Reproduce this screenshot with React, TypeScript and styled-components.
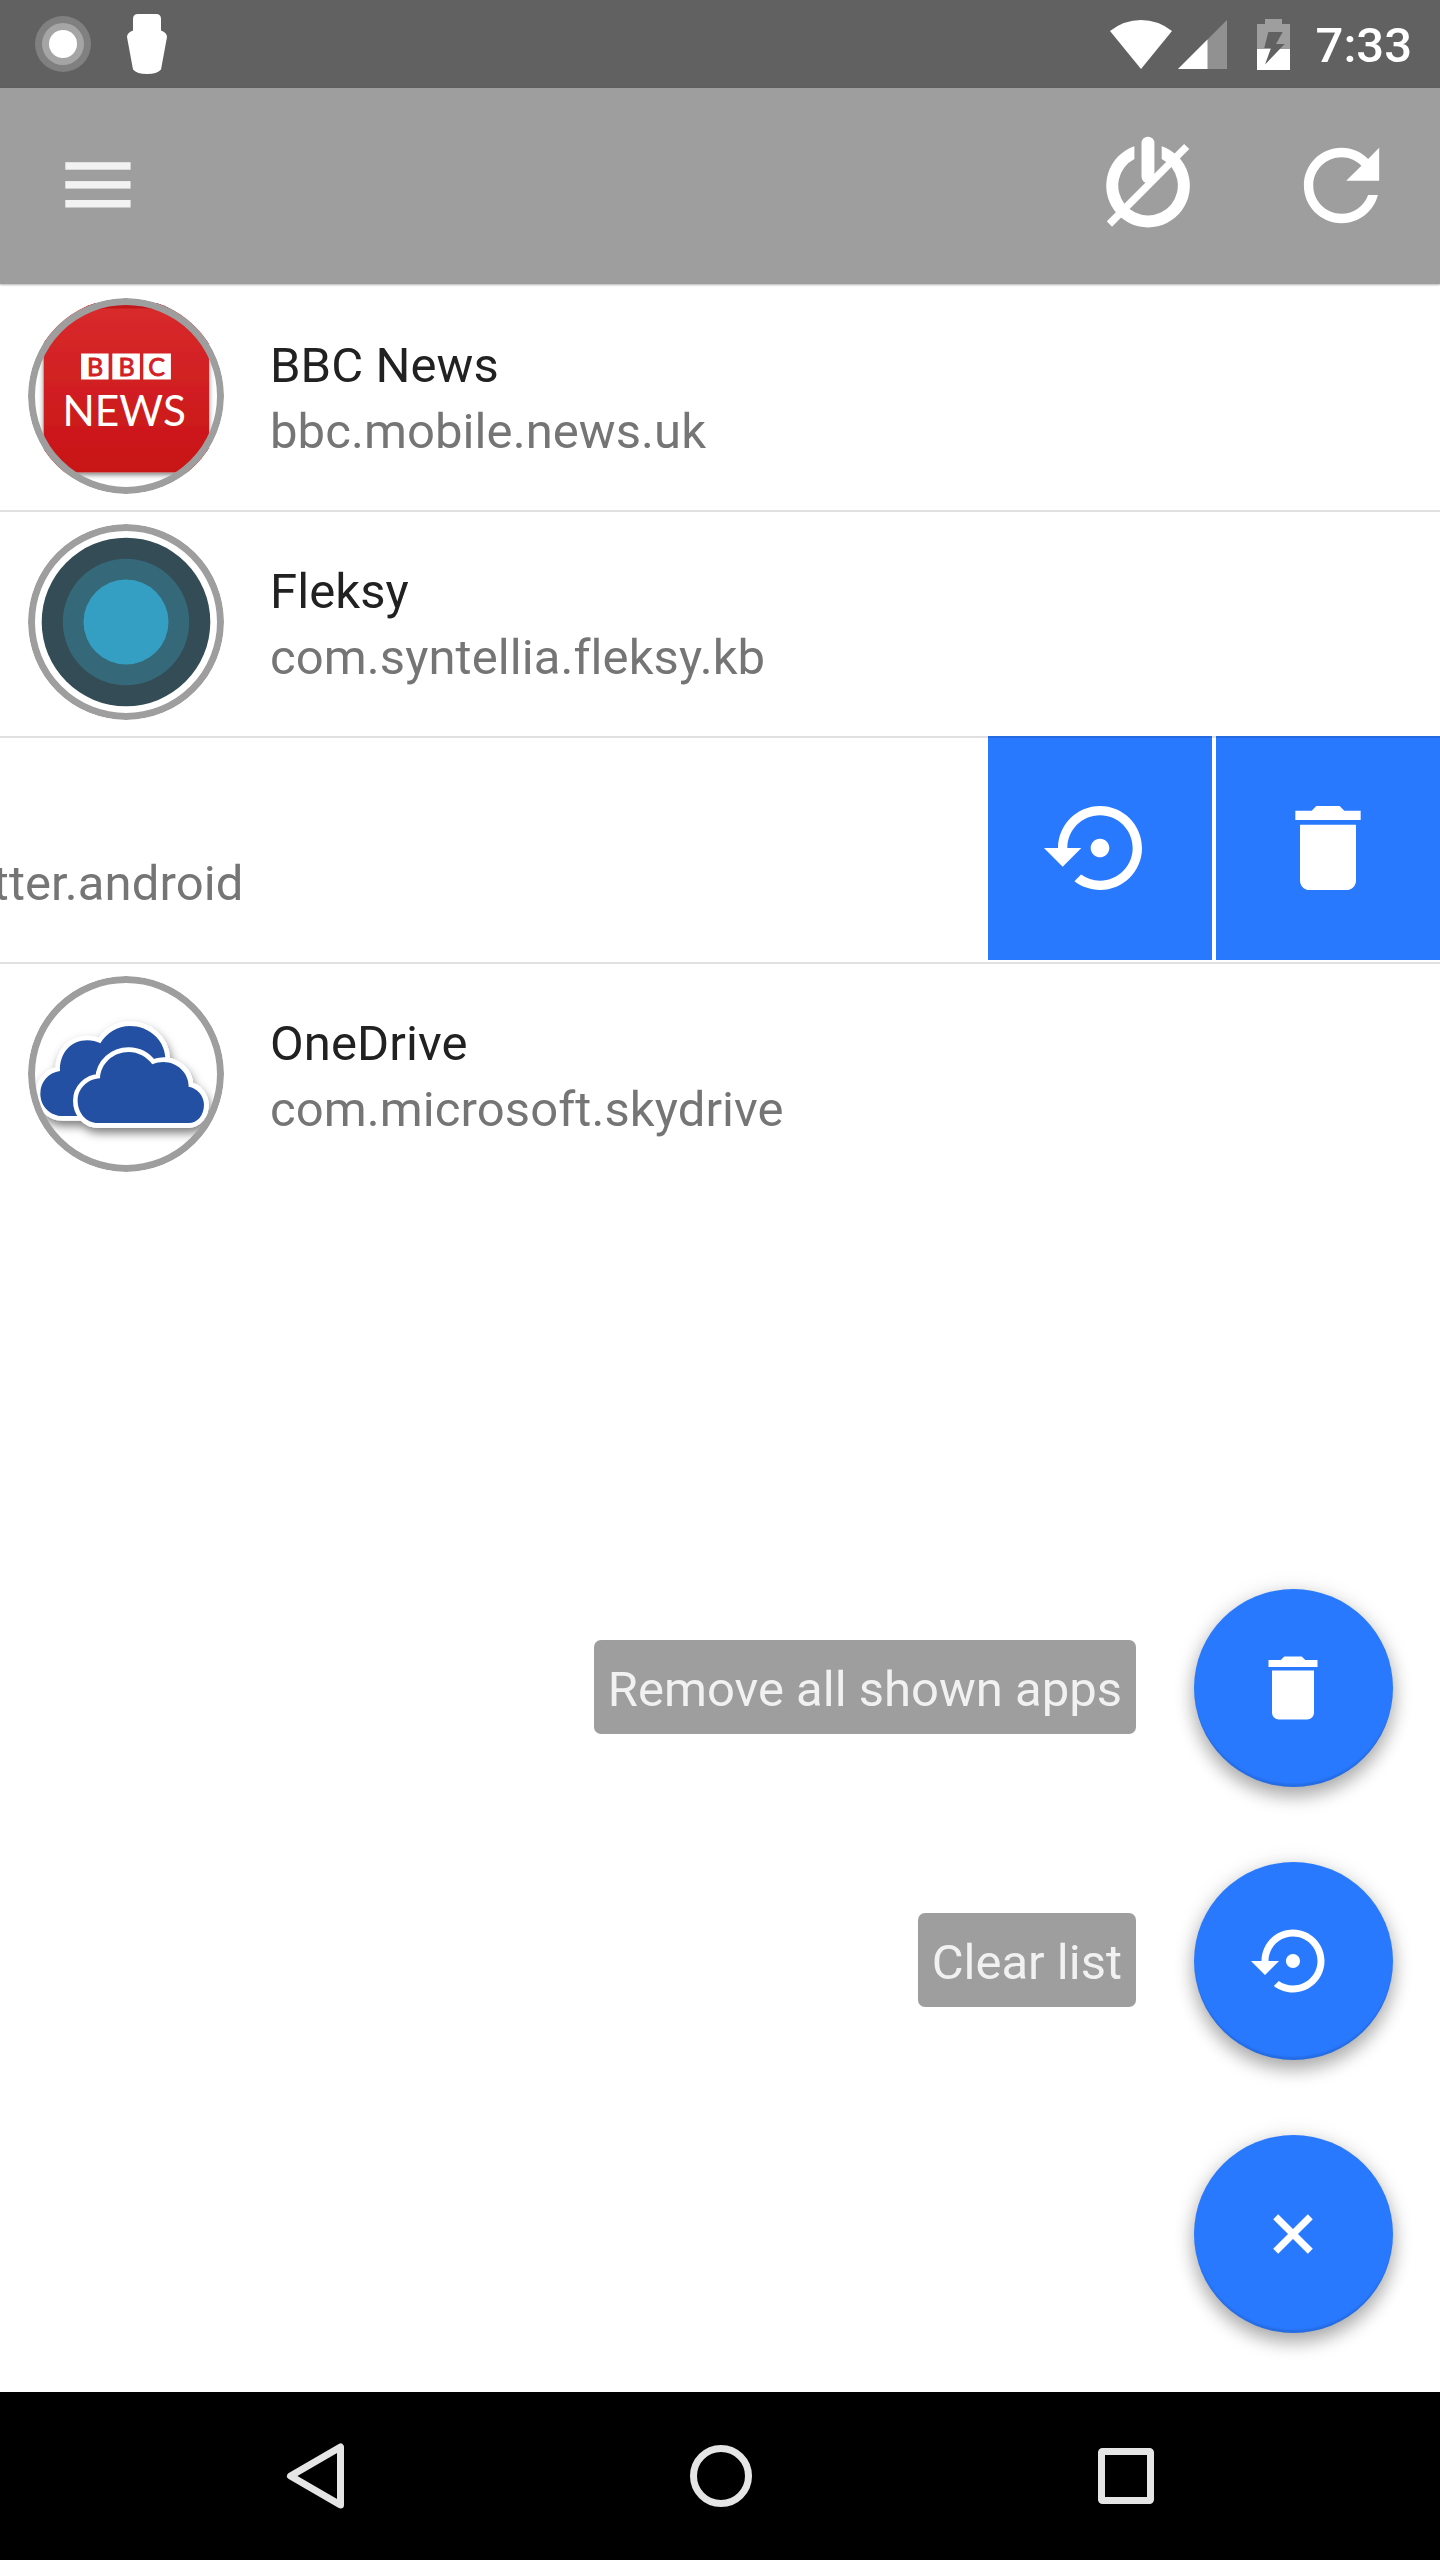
import React from "react";
import styled, { createGlobalStyle } from "styled-components";

const GREY = "#9e9e9e";
const BLUE = "#2979ff";

const GlobalStyle = createGlobalStyle`
  html, body { margin: 0; padding: 0; background: #fff; }
  *, *::before { box-sizing: border-box; }
  button { border: 0; padding: 0; margin: 0; font: inherit; color: inherit; background: none; }
  svg { display: block; }
`;

const Screen = styled.div`
  width: 1440px;
  height: 2560px;
  display: flex;
  flex-direction: column;
  overflow: hidden;
  background: #fff;
  font-family: Roboto, "Liberation Sans", sans-serif;
  font-size: 49px;
  font-variant-ligatures: none;
`;

const StatusBar = styled.div`
  height: 88px;
  flex: none;
  display: flex;
  align-items: center;
  justify-content: space-between;
  padding: 0 28px 0 35px;
  background: #616161;
  color: #fff;
`;

const StatusGroup = styled.div<{ $gap: number }>`
  display: flex;
  align-items: center;
  gap: ${(p) => p.$gap}px;
`;

const Clock = styled.span`
  font-weight: 500;
  line-height: 58px;
  padding-top: 4px;
`;

const AppBar = styled.header`
  height: 196px;
  flex: none;
  display: flex;
  align-items: center;
  padding: 0 42px 2px 65px;
  background: ${GREY};
  box-shadow: 0 1px 2px rgba(0, 0, 0, 0.3);
  position: relative;
  z-index: 1;
`;

const MenuButton = styled.button`
  margin-right: auto;
`;

const BarButton = styled.button`
  width: 113px;
  height: 113px;
  display: flex;
  align-items: center;
  justify-content: center;
  & + & {
    margin-left: 81px;
  }
`;

const Content = styled.main`
  flex: 1;
  position: relative;
  overflow: hidden;
`;

const List = styled.ul`
  list-style: none;
  margin: 0;
  padding: 0;
  display: flex;
  flex-direction: column;
  gap: 2px;
`;

const Row = styled.li`
  height: 224px;
  display: flex;
  position: relative;
  overflow: hidden;
  & + &::before {
    content: "";
    position: absolute;
    inset: 0 0 auto 0;
    height: 2px;
    background: rgba(0, 0, 0, 0.12);
    z-index: 1;
  }
`;

const RowBody = styled.div<{ $swiped?: boolean }>`
  flex: none;
  width: 1440px;
  display: flex;
  align-items: center;
  gap: 46px;
  padding: 0 28px;
  margin-left: ${(p) => (p.$swiped ? -452 : 0)}px;
`;

const Avatar = styled.div`
  width: 196px;
  height: 196px;
  flex: none;
  border-radius: 50%;
  overflow: hidden;
`;

const Labels = styled.div`
  display: flex;
  flex-direction: column;
  white-space: nowrap;
  line-height: 66px;
  padding-top: 5px;
  letter-spacing: 0.08px;
`;

const AppName = styled.span`
  color: #212121;
`;

const PackageName = styled.span`
  color: #757575;
`;

const Actions = styled.div`
  flex: none;
  display: flex;
  gap: 4px;
`;

const Action = styled.button`
  width: 224px;
  height: 224px;
  display: flex;
  align-items: center;
  justify-content: center;
  background: ${BLUE};
`;

const FabMenu = styled.div`
  position: absolute;
  right: 47px;
  bottom: 59px;
  display: flex;
  flex-direction: column;
  gap: 75px;
`;

const FabRow = styled.div`
  display: flex;
  align-items: center;
  justify-content: flex-end;
  gap: 58px;
`;

const FabLabel = styled.span`
  height: 94px;
  padding: 0 14px;
  margin-bottom: 2px;
  border-radius: 7px;
  background: ${GREY};
  color: #f1f1f1;
  line-height: 100px;
  white-space: nowrap;
`;

const Fab = styled.button`
  width: 199px;
  height: 198px;
  flex: none;
  border-radius: 50%;
  display: flex;
  align-items: center;
  justify-content: center;
  padding-right: 1px;
  background: ${BLUE};
  box-shadow:
    inset 0 -4px 2px -1px rgba(0, 0, 0, 0.11),
    0 10px 18px rgba(0, 0, 0, 0.27),
    0 2px 22px rgba(0, 0, 0, 0.13);
`;

const NavBar = styled.nav`
  height: 168px;
  flex: none;
  display: flex;
  align-items: center;
  justify-content: space-between;
  padding: 0 281px 0 282px;
  background: #000;
`;

const RecordIcon = () => (
  <svg width="56" height="56" viewBox="0 0 56 56">
    <circle cx="28" cy="28" r="28" fill="#808080" />
    <circle cx="28" cy="28" r="21" fill="#a5a5a5" />
    <circle cx="28" cy="28" r="14" fill="#fff" />
  </svg>
);

const BottleIcon = () => (
  <svg width="40" height="60" viewBox="0 0 40 60" fill="#fff">
    <path d="M11 0h18q5 0 5 5v11.500q6 2 6 6.500l-6 32.500Q30 60 20 60T6 55.500L0 23q0-4.500 6-6.500V5q0-5 5-5z" />
  </svg>
);

const WifiIcon = () => (
  <svg width="62" height="50" viewBox="0 0 62 50" fill="#fff">
    <path d="M0 12Q14 1 31 1t31 11L31 50z" />
  </svg>
);

const SignalIcon = () => (
  <svg width="49" height="50" viewBox="0 0 49 50">
    <path d="M0 50L49 1v49z" fill="#919191" />
    <path d="M0 50L29.500 20.500V50z" fill="#fff" />
  </svg>
);

const BatteryIcon = () => (
  <svg width="33" height="51" viewBox="0 0 33 51">
    <path d="M8 0h17v5h8v46H0V5h8z" fill={GREY} />
    <path d="M0 30h33v21H0z" fill="#fff" />
    <path d="M11.300 13h14.400l-6.700 12h8.700L8 45.500 14 29H7.300z" fill="#616161" />
  </svg>
);

const MenuIcon = () => (
  <svg width="66" height="46" viewBox="0 0 66 46" fill="#f2f2f2">
    <rect x=".3" y=".2" width="65.300" height="7.500" />
    <rect x=".3" y="19.100" width="65.300" height="7.500" />
    <rect x=".3" y="38" width="65.300" height="7.500" />
  </svg>
);

const PowerOffIcon = () => (
  <svg width="113" height="113" viewBox="0 0 113 113" fill="#fff">
    <path d="M43.400 17.200A41.800 41.800 0 1 0 70.700 17.200V30.100A29.800 29.800 0 1 1 43.400 30.100z" />
    <rect x="50.500" y="7.700" width="12.900" height="46.500" rx="6.400" />
    <path d="M15.800 92.300L93.100 15l5.200 5L21 97.700z" />
  </svg>
);

const RefreshIcon = () => (
  <svg width="113" height="113" viewBox="0 0 24 24" fill="#fff">
    <path d="M17.650 6.350C16.200 4.900 14.210 4 12 4c-4.420 0-7.990 3.580-7.990 8s3.570 8 7.990 8c3.730 0 6.840-2.550 7.730-6h-2.080c-.82 2.330-3.040 4-5.650 4-3.310 0-6-2.690-6-6s2.690-6 6-6c1.660 0 3.140.69 4.220 1.780L13 11h7V4l-2.350 2.350z" />
  </svg>
);

const RestoreIcon = ({ size }: { size: number }) => (
  <svg width={size} height={size} viewBox="0 0 24 24" fill="#fff">
    <path d="M14 12c0-1.100-.9-2-2-2s-2 .9-2 2 .9 2 2 2 2-.9 2-2zm-2-9c-4.970 0-9 4.030-9 9H0l4 4 4-4H5c0-3.870 3.130-7 7-7s7 3.130 7 7-3.130 7-7 7c-1.510 0-2.910-.49-4.060-1.300l-1.420 1.440C8.040 20.300 9.940 21 12 21c4.970 0 9-4.030 9-9s-4.030-9-9-9z" />
  </svg>
);

const DeleteIcon = ({ size }: { size: number }) => (
  <svg width={size} height={size} viewBox="0 0 24 24" fill="#fff">
    <path d="M6 19c0 1.100.9 2 2 2h8c1.100 0 2-.9 2-2V7H6v12zM19 4h-3.500l-1-1h-5l-1 1H5v2h14V4z" />
  </svg>
);

const CloseIcon = () => (
  <svg width="40" height="40" viewBox="0 0 40 40" stroke="#fff" strokeWidth="7">
    <path d="M2.700 2.700l34.600 34.600M37.300 2.700L2.700 37.300" />
  </svg>
);

const Ring = () => <circle cx="98" cy="98" r="94.500" fill="none" stroke={GREY} strokeWidth="7" />;

const BbcNewsLogo = () => (
  <svg width="196" height="196" viewBox="0 0 196 196">
    <defs>
      <linearGradient id="bbcRed" x1="0" y1="0" x2="0" y2="1">
        <stop offset="0" stopColor="#d92b2d" />
        <stop offset="1" stopColor="#c81316" />
      </linearGradient>
      <filter id="bbcShadow" x="-10%" y="-10%" width="120%" height="120%">
        <feDropShadow dx="0" dy="2.500" stdDeviation="2.500" floodOpacity=".5" />
      </filter>
    </defs>
    <g filter="url(#bbcShadow)">
      <rect x="15.700" y="5" width="165.300" height="169.300" fill="url(#bbcRed)" />
    </g>
    <rect x="15.700" y="5" width="165.300" height="5.500" fill="#c1171b" />
    <g fill="#fff">
      <rect x="53" y="55.500" width="27.600" height="26" />
      <rect x="84.300" y="55.500" width="27.600" height="26" />
      <rect x="115.300" y="55.500" width="27.600" height="26" />
    </g>
    <g
      fill="#d22024"
      stroke="#d22024"
      strokeWidth=".9"
      fontFamily="Lato, sans-serif"
      fontWeight="400"
      fontSize="25"
      textAnchor="middle"
    >
      <text x="67.200" y="77.500">B</text>
      <text x="98.500" y="77.500">B</text>
      <text x="128.600" y="77.500">C</text>
    </g>
    <text
      x="34.500"
      y="127.600"
      fill="#fff"
      fontFamily="Lato, sans-serif"
      fontSize="42.500"
      textLength="123.500"
      lengthAdjust="spacingAndGlyphs"
    >
      NEWS
    </text>
    <Ring />
  </svg>
);

const FleksyLogo = () => (
  <svg width="196" height="196" viewBox="0 0 196 196">
    <circle cx="98" cy="98" r="84.300" fill="#344c55" />
    <circle cx="98" cy="98" r="63.200" fill="#356878" />
    <circle cx="98" cy="98" r="42.500" fill="#359fc3" />
    <Ring />
  </svg>
);

const BACK_CLOUD =
  "M188 468C150 468 121 438 121 401C121 365 145 338 180 333C178 280 212 241 262 241C276 241 289 244 301 250C320 218 352 198 390 198C446 198 492 238 496 292L440 340L300 468Z";
const FRONT_CLOUD =
  "M294 489C258 489 233 458 233 422C233 386 262 357 300 355C302 310 340 276 386 276C414 276 440 290 457 313C512 290 566 328 566 380C592 384 612 408 612 434C612 466 592 489 566 489Z";

const OneDriveLogo = () => (
  <svg width="196" height="196" viewBox="0 0 196 196">
    <defs>
      <filter id="cloudShadow" x="-20%" y="-20%" width="140%" height="150%">
        <feDropShadow dx="5" dy="16" stdDeviation="14" floodOpacity=".5" />
      </filter>
    </defs>
    <g transform="scale(.33333) translate(-84 -48)" fill="#2450a4">
      <g stroke="#fff" strokeWidth="28" strokeLinejoin="round" filter="url(#cloudShadow)">
        <path d={BACK_CLOUD} />
        <path d={FRONT_CLOUD} />
      </g>
      <path d={BACK_CLOUD} />
      <path d={FRONT_CLOUD} stroke="#fff" strokeWidth="28" strokeLinejoin="round" />
      <path d={FRONT_CLOUD} />
    </g>
    <Ring />
  </svg>
);

const BackIcon = () => (
  <svg width="66" height="70" viewBox="0 0 66 70" fill="none" stroke="#e5e5e5" strokeWidth="7" strokeLinejoin="round">
    <path d="M8.500 35L58.500 6v58z" />
  </svg>
);

const HomeIcon = () => (
  <svg width="66" height="70" viewBox="0 0 66 70" fill="none" stroke="#e5e5e5" strokeWidth="7">
    <circle cx="33" cy="35" r="27.500" />
  </svg>
);

const RecentsIcon = () => (
  <svg width="66" height="70" viewBox="0 0 66 70" fill="none" stroke="#e5e5e5" strokeWidth="7">
    <rect x="8.500" y="10.500" width="49" height="49" rx="1" />
  </svg>
);

const SignalIcons = styled(StatusGroup)`
  margin-right: 30px;
`;

const BatteryAndClock = styled(StatusGroup)``;

type AppEntry = { name: string; pkg: string; logo?: React.ReactNode; swiped?: boolean };

const apps: AppEntry[] = [
  { name: "BBC News", pkg: "bbc.mobile.news.uk", logo: <BbcNewsLogo /> },
  { name: "Fleksy", pkg: "com.syntellia.fleksy.kb", logo: <FleksyLogo /> },
  { name: "Twitter", pkg: "com.twitter.android", swiped: true },
  { name: "OneDrive", pkg: "com.microsoft.skydrive", logo: <OneDriveLogo /> },
];

export default function App() {
  return (
    <>
      <GlobalStyle />
      <Screen>
        <StatusBar>
          <StatusGroup $gap={36}>
            <RecordIcon />
            <BottleIcon />
          </StatusGroup>
          <StatusGroup $gap={0}>
            <SignalIcons $gap={6}>
              <WifiIcon />
              <SignalIcon />
            </SignalIcons>
            <BatteryAndClock $gap={26}>
              <BatteryIcon />
              <Clock>7:33</Clock>
            </BatteryAndClock>
          </StatusGroup>
        </StatusBar>
        <AppBar>
          <MenuButton aria-label="Menu">
            <MenuIcon />
          </MenuButton>
          <BarButton aria-label="Disable">
            <PowerOffIcon />
          </BarButton>
          <BarButton aria-label="Refresh">
            <RefreshIcon />
          </BarButton>
        </AppBar>
        <Content>
          <List>
            {apps.map((app) => (
              <Row key={app.pkg}>
                <RowBody $swiped={app.swiped}>
                  <Avatar>{app.logo}</Avatar>
                  <Labels>
                    <AppName>{app.name}</AppName>
                    <PackageName>{app.pkg}</PackageName>
                  </Labels>
                </RowBody>
                {app.swiped && (
                  <Actions>
                    <Action aria-label="Restore">
                      <RestoreIcon size={112} />
                    </Action>
                    <Action aria-label="Delete">
                      <DeleteIcon size={112} />
                    </Action>
                  </Actions>
                )}
              </Row>
            ))}
          </List>
          <FabMenu>
            <FabRow>
              <FabLabel>Remove all shown apps</FabLabel>
              <Fab aria-label="Remove all shown apps">
                <DeleteIcon size={84} />
              </Fab>
            </FabRow>
            <FabRow>
              <FabLabel>Clear list</FabLabel>
              <Fab aria-label="Clear list">
                <RestoreIcon size={84} />
              </Fab>
            </FabRow>
            <FabRow>
              <Fab aria-label="Close">
                <CloseIcon />
              </Fab>
            </FabRow>
          </FabMenu>
        </Content>
        <NavBar>
          <BackIcon />
          <HomeIcon />
          <RecentsIcon />
        </NavBar>
      </Screen>
    </>
  );
}
